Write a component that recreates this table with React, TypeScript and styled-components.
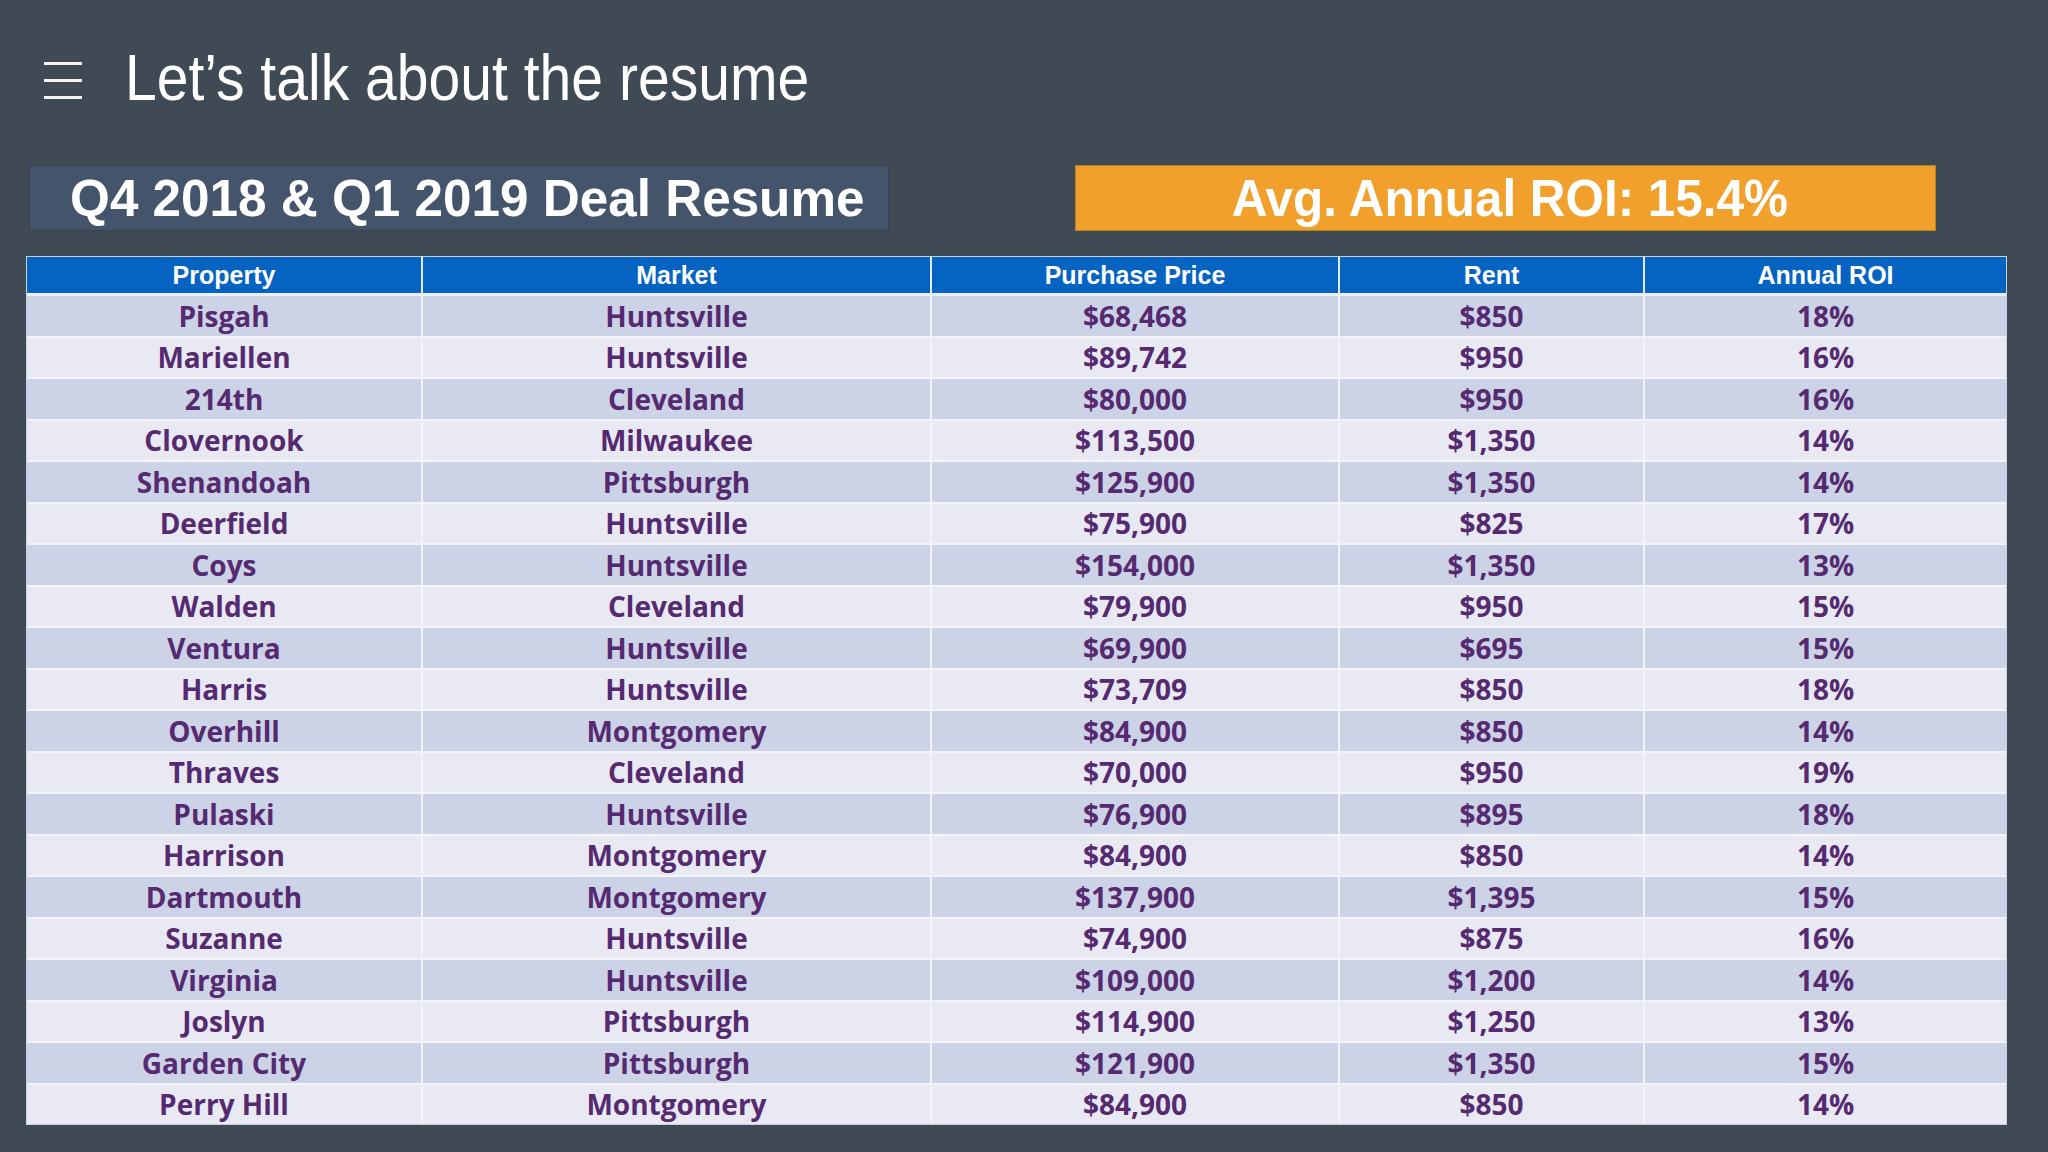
import React from 'react';
import styled, { createGlobalStyle } from 'styled-components';

const GlobalStyle = createGlobalStyle`
  html, body {
    margin: 0;
    padding: 0;
    background: #3f4a54;
  }
  body {
    width: 2048px;
    height: 1152px;
    overflow: hidden;
  }
`;

const Page = styled.div`
  width: 2048px;
  height: 1152px;
  box-sizing: border-box;
  padding: 0 42px 0 27px;
  background: #3f4a54;
  display: flex;
  flex-direction: column;
`;

const TopBar = styled.div`
  height: 160px;
  display: flex;
  align-items: flex-start;
  padding: 38px 0 0 17px;
  box-sizing: border-box;
`;

const MenuButton = styled.div`
  width: 38px;
  height: 37px;
  margin-top: 24px;
  display: flex;
  flex-direction: column;
  justify-content: space-between;
  & > span {
    display: block;
    height: 3px;
    background: #f2f3f5;
  }
`;

const Title = styled.h1`
  margin: 0 0 0 43px;
  font-family: 'Liberation Sans', Arial, sans-serif;
  font-weight: 400;
  font-size: 65px;
  line-height: 80px;
  color: #ffffff;
  transform: scaleX(0.878);
  transform-origin: left center;
  white-space: nowrap;
`;

const BannerRow = styled.div`
  display: flex;
  justify-content: space-between;
  padding: 5px 70px 0 2px;
  height: 97px;
  box-sizing: border-box;
`;

const Banner = styled.div<{ $tone: 'slate' | 'orange'; $w: number }>`
  width: ${(p) => p.$w}px;
  height: 66px;
  box-sizing: border-box;
  display: flex;
  align-items: center;
  justify-content: center;
  padding-left: ${(p) => (p.$tone === 'orange' ? 8 : 16)}px;
  background: ${(p) => (p.$tone === 'orange' ? '#f0a02b' : '#44546a')};
  border: 1px solid ${(p) => (p.$tone === 'orange' ? '#b9801f' : '#37434f')};
  font-family: 'Liberation Sans', Arial, sans-serif;
  font-weight: 700;
  font-size: 52px;
  color: #ffffff;
  white-space: nowrap;
  & > span {
    display: inline-block;
    transform: scaleX(${(p) => (p.$tone === 'orange' ? 0.95 : 0.985)});
  }
`;

const Table = styled.table`
  width: 1979px;
  border-collapse: collapse;
  table-layout: fixed;
  outline: 1px solid #c9d0e2;
`;

const HeadCell = styled.th`
  height: 36px;
  padding: 0;
  background: #0563c1;
  color: #ffffff;
  font-family: 'Liberation Sans', Arial, sans-serif;
  font-weight: 700;
  font-size: 25px;
  text-align: center;
  border-left: 2px solid #e6ebf5;
  border-bottom: 3px solid #eef0f7;
  &:first-child {
    border-left: none;
  }
`;

const Row = styled.tr<{ $odd: boolean }>`
  background: ${(p) => (p.$odd ? '#cdd3e6' : '#e8e9f3')};
`;

const Cell = styled.td`
  height: 39.5px;
  padding: 0;
  text-align: center;
  font-family: 'Open Sans', 'Noto Sans', sans-serif;
  font-weight: 700;
  font-size: 28px;
  line-height: 38px;
  color: #552a70;
  border-left: 2px solid #f3f4f9;
  border-top: 2px solid #f3f4f9;
  &:first-child {
    border-left: none;
  }
`;

const columns = [
  { label: 'Property', width: 395 },
  { label: 'Market', width: 509 },
  { label: 'Purchase Price', width: 408 },
  { label: 'Rent', width: 305 },
  { label: 'Annual ROI', width: 362 },
];

const deals: [string, string, string, string, string][] = [
  ['Pisgah', 'Huntsville', '$68,468', '$850', '18%'],
  ['Mariellen', 'Huntsville', '$89,742', '$950', '16%'],
  ['214th', 'Cleveland', '$80,000', '$950', '16%'],
  ['Clovernook', 'Milwaukee', '$113,500', '$1,350', '14%'],
  ['Shenandoah', 'Pittsburgh', '$125,900', '$1,350', '14%'],
  ['Deerfield', 'Huntsville', '$75,900', '$825', '17%'],
  ['Coys', 'Huntsville', '$154,000', '$1,350', '13%'],
  ['Walden', 'Cleveland', '$79,900', '$950', '15%'],
  ['Ventura', 'Huntsville', '$69,900', '$695', '15%'],
  ['Harris', 'Huntsville', '$73,709', '$850', '18%'],
  ['Overhill', 'Montgomery', '$84,900', '$850', '14%'],
  ['Thraves', 'Cleveland', '$70,000', '$950', '19%'],
  ['Pulaski', 'Huntsville', '$76,900', '$895', '18%'],
  ['Harrison', 'Montgomery', '$84,900', '$850', '14%'],
  ['Dartmouth', 'Montgomery', '$137,900', '$1,395', '15%'],
  ['Suzanne', 'Huntsville', '$74,900', '$875', '16%'],
  ['Virginia', 'Huntsville', '$109,000', '$1,200', '14%'],
  ['Joslyn', 'Pittsburgh', '$114,900', '$1,250', '13%'],
  ['Garden City', 'Pittsburgh', '$121,900', '$1,350', '15%'],
  ['Perry Hill', 'Montgomery', '$84,900', '$850', '14%'],
];

const App = () => {
  return (
    <>
      <GlobalStyle />
      <Page>
        <TopBar>
          <MenuButton>
            <span />
            <span />
            <span />
          </MenuButton>
          <Title>Let’s talk about the resume</Title>
        </TopBar>
        <BannerRow>
          <Banner $tone='slate' $w={860}>
            <span>Q4 2018 &amp; Q1 2019 Deal Resume</span>
          </Banner>
          <Banner $tone='orange' $w={861}>
            <span>Avg. Annual ROI: 15.4%</span>
          </Banner>
        </BannerRow>
        <Table>
          <colgroup>
            {columns.map((c) => (
              <col key={c.label} style={{ width: c.width }} />
            ))}
          </colgroup>
          <thead>
            <tr>
              {columns.map((c) => (
                <HeadCell key={c.label}>{c.label}</HeadCell>
              ))}
            </tr>
          </thead>
          <tbody>
            {deals.map((d, i) => (
              <Row key={d[0]} $odd={i % 2 === 0}>
                {d.map((v, j) => (
                  <Cell key={j}>{v}</Cell>
                ))}
              </Row>
            ))}
          </tbody>
        </Table>
      </Page>
    </>
  );
};

export default App;
